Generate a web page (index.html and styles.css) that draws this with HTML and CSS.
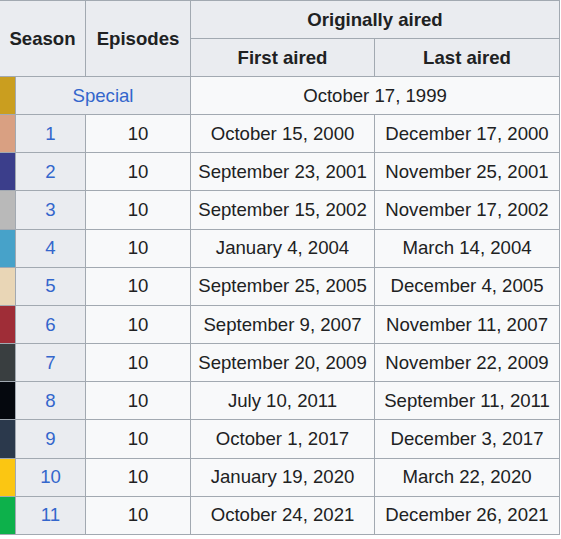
FILE: index.html
```html
<!DOCTYPE html>
<html>
<head>
<meta charset="utf-8">
<link rel="stylesheet" href="styles.css">
</head>
<body>
<table class="wikitable">
  <colgroup>
    <col class="c-sw"><col class="c-season"><col class="c-ep"><col class="c-first"><col class="c-last">
  </colgroup>
  <thead>
    <tr class="hrow">
      <th colspan="2" rowspan="2">Season</th>
      <th rowspan="2">Episodes</th>
      <th colspan="2">Originally aired</th>
    </tr>
    <tr class="hrow">
      <th>First aired</th>
      <th>Last aired</th>
    </tr>
  </thead>
  <tbody>
    <tr><td class="sw sw-sp"></td><th colspan="2" class="rh"><a href="#">Special</a></th><td colspan="2">October 17, 1999</td></tr>
    <tr><td class="sw sw-1"></td><th class="rh"><a href="#">1</a></th><td>10</td><td>October 15, 2000</td><td>December 17, 2000</td></tr>
    <tr><td class="sw sw-2"></td><th class="rh"><a href="#">2</a></th><td>10</td><td>September 23, 2001</td><td>November 25, 2001</td></tr>
    <tr><td class="sw sw-3"></td><th class="rh"><a href="#">3</a></th><td>10</td><td>September 15, 2002</td><td>November 17, 2002</td></tr>
    <tr><td class="sw sw-4"></td><th class="rh"><a href="#">4</a></th><td>10</td><td>January 4, 2004</td><td>March 14, 2004</td></tr>
    <tr><td class="sw sw-5"></td><th class="rh"><a href="#">5</a></th><td>10</td><td>September 25, 2005</td><td>December 4, 2005</td></tr>
    <tr><td class="sw sw-6"></td><th class="rh"><a href="#">6</a></th><td>10</td><td>September 9, 2007</td><td>November 11, 2007</td></tr>
    <tr><td class="sw sw-7"></td><th class="rh"><a href="#">7</a></th><td>10</td><td>September 20, 2009</td><td>November 22, 2009</td></tr>
    <tr><td class="sw sw-8"></td><th class="rh"><a href="#">8</a></th><td>10</td><td>July 10, 2011</td><td>September 11, 2011</td></tr>
    <tr><td class="sw sw-9"></td><th class="rh"><a href="#">9</a></th><td>10</td><td>October 1, 2017</td><td>December 3, 2017</td></tr>
    <tr><td class="sw sw-10"></td><th class="rh"><a href="#">10</a></th><td>10</td><td>January 19, 2020</td><td>March 22, 2020</td></tr>
    <tr><td class="sw sw-11"></td><th class="rh"><a href="#">11</a></th><td>10</td><td>October 24, 2021</td><td>December 26, 2021</td></tr>
  </tbody>
</table>
</body>
</html>
```
FILE: styles.css
```css
html, body {
  margin: 0;
  padding: 0;
  background: #ffffff;
}
body {
  font-family: "Liberation Sans", Arial, sans-serif;
  font-size: 18.6px;
  color: #202122;
}
.wikitable {
  border-collapse: collapse;
  table-layout: fixed;
  width: 561px;
  margin-left: -1px;
  background: #f8f9fa;
  color: #202122;
}
.c-sw { width: 16px; }
.c-season { width: 70px; }
.c-ep { width: 105px; }
.c-first { width: 184px; }
.c-last { width: 185px; }

.wikitable th,
.wikitable td {
  border: 1px solid #a2a9b1;
  padding: 0;
  text-align: center;
  vertical-align: middle;
  white-space: nowrap;
  line-height: 22px;
}
.wikitable th {
  background: #eaecf0;
  font-weight: bold;
}
.hrow { height: 38px; }
.wikitable tbody tr { height: 38.17px; }
.wikitable th.rh { font-weight: normal; }
.wikitable a {
  color: #3366cc;
  text-decoration: none;
}
.sw-sp { background: #ca9e1f; }
.sw-1 { background: #d9a082; }
.sw-2 { background: #3b3e8b; }
.sw-3 { background: #b9b9b9; }
.sw-4 { background: #47a2c9; }
.sw-5 { background: #e9d6b6; }
.sw-6 { background: #9f2d37; }
.sw-7 { background: #393e40; }
.sw-8 { background: #05080e; }
.sw-9 { background: #2b394c; }
.sw-10 { background: #fbc612; }
.sw-11 { background: #0db14b; }
```
